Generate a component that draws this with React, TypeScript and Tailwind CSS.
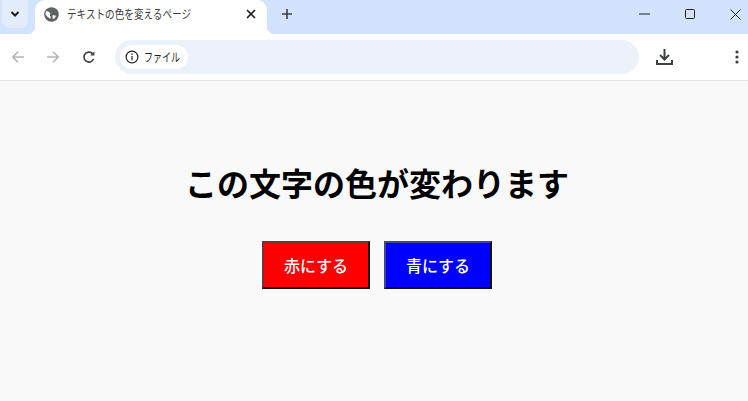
import React from 'react';

const jp = { fontFamily: '"Noto Sans CJK JP", sans-serif' };

const TabBar: React.FC = () => (
    <div className="flex h-[34px] bg-[#d3e3fd] items-stretch">
        <div className="w-[35px] shrink-0 pl-[2px]">
            <div className="w-[26px] h-[28px] rounded-b-[8px] bg-[#e3ecfb] flex items-center justify-center">
                <svg width="10" height="10" viewBox="0 0 10 10" fill="none" stroke="#1f1f1f" strokeWidth="2">
                    <path d="M1.5 3l3.5 3.5L8.5 3" />
                </svg>
            </div>
        </div>
        <div className="relative w-[232px] shrink-0 bg-white rounded-t-[10px] flex items-center pl-[9px] pr-[10px] pb-[6px]">
            <div className="absolute -left-[8px] bottom-0 w-[8px] h-[8px] bg-[radial-gradient(circle_at_0_0,#d3e3fd_8px,#ffffff_8.5px)]" />
            <div className="absolute -right-[8px] bottom-0 w-[8px] h-[8px] bg-[radial-gradient(circle_at_100%_0,#d3e3fd_8px,#ffffff_8.5px)]" />
            <svg width="15" height="15" viewBox="0 0 16 16" className="shrink-0">
                <circle cx="8" cy="8" r="7.8" fill="#5f6368" />
                <path d="M2.2 4.2L5 5l2 2-1.2 1.6L7.2 10.5 6.8 12.6 3.6 10.4 1.6 7.6zM9.2 8.6l3.6.6-1.6 3-2 .6z" fill="#ffffff" />
            </svg>
            <span style={jp} className="inline-block ml-[8px] flex-1 text-[12px] leading-none text-[#3c3c3c] whitespace-nowrap origin-left scale-x-[0.8]">テキストの色を変えるページ</span>
            <svg width="10" height="10" viewBox="0 0 10 10" fill="none" stroke="#1f1f1f" strokeWidth="1.7" className="shrink-0 mr-[1px]">
                <path d="M1 1l8 8M9 1l-8 8" />
            </svg>
        </div>
        <div className="ml-[14px] w-[12px] flex items-center justify-center pb-[6px]">
            <svg width="12" height="12" viewBox="0 0 12 12" fill="none" stroke="#3c4043" strokeWidth="1.6" className="shrink-0">
                <path d="M6 1v10M1 6h10" />
            </svg>
        </div>
        <div className="flex-1" />
        <div className="flex items-center gap-[35px] pr-[7px] pb-[6px]">
            <svg width="11" height="2" viewBox="0 0 11 2"><path d="M0 1h11" stroke="#1f1f1f" strokeWidth="1" /></svg>
            <svg width="10" height="10" viewBox="0 0 10 10" fill="none"><rect x="0.5" y="0.5" width="9" height="9" rx="1" stroke="#1f1f1f" strokeWidth="1" /></svg>
            <svg width="11" height="11" viewBox="0 0 11 11" fill="none" stroke="#1f1f1f" strokeWidth="1"><path d="M.5.5l10 10M10.5.5l-10 10" /></svg>
        </div>
    </div>
);

const Toolbar: React.FC = () => (
    <div className="flex h-[47px] bg-white border-b border-[#e1e3e6] items-center">
        <div className="w-[35px] flex justify-center">
            <svg width="14" height="14" viewBox="0 0 14 14" fill="none" stroke="#b3b5b8" strokeWidth="1.6"><path d="M13 7H2M7 1.8L1.8 7 7 12.2" /></svg>
        </div>
        <div className="w-[36px] flex justify-center">
            <svg width="14" height="14" viewBox="0 0 14 14" fill="none" stroke="#b3b5b8" strokeWidth="1.6"><path d="M1 7h11M7 1.8L12.2 7 7 12.2" /></svg>
        </div>
        <div className="w-[36px] flex justify-center">
            <svg width="14" height="14" viewBox="0 0 14 14" fill="none" stroke="#3c4043" strokeWidth="1.6"><path d="M11.6 9a5 5 0 1 1-.3-4.4" /><path d="M12.4 1.2v4.2H8.2z" fill="#3c4043" stroke="none" /></svg>
        </div>
        <div className="ml-[8px] w-[524px] h-[34px] rounded-full bg-[#edf2fa] flex items-center pl-[5px]">
            <div className="w-[68px] h-[24px] rounded-full bg-white flex items-center pl-[5px]">
                <svg width="14" height="14" viewBox="0 0 14 14" fill="none" stroke="#1f1f1f" strokeWidth="1.2" className="shrink-0">
                    <circle cx="7" cy="7" r="5.9" />
                    <path d="M7 6v4.2M7 3.6v1.4" />
                </svg>
                <span style={jp} className="inline-block ml-[5px] text-[12px] leading-none text-[#1f1f1f] whitespace-nowrap origin-left scale-x-[0.75]">ファイル</span>
            </div>
        </div>
        <div className="flex-1" />
        <div className="flex items-center">
            <svg width="17" height="16" viewBox="0 0 17 16" fill="none" stroke="#3c4043" strokeWidth="2" className="mr-[62px]">
                <path d="M8.5 0v10M4 6l4.5 4.5L13 6M1 11v4h15v-4" />
            </svg>
            <svg width="4" height="14" viewBox="0 0 4 14" fill="#3c4043" className="mr-[9px]">
                <circle cx="2" cy="2" r="1.6" /><circle cx="2" cy="7" r="1.6" /><circle cx="2" cy="12" r="1.6" />
            </svg>
        </div>
    </div>
);

const App: React.FC = () => {
    return (
        <div className="h-[401px] w-[748px] overflow-hidden flex flex-col bg-[#f9f9f9]" style={jp}>
            <TabBar />
            <Toolbar />
            <div className="flex-1 flex flex-col items-center pt-[78px] pl-[6px]">
                <h1 className="text-[32px] leading-[46px] font-bold text-black whitespace-nowrap">この文字の色が変わります</h1>
                <div className="mt-[36px] flex gap-[14px]">
                    <button className="w-[108px] h-[48px] border-2 border-t-[#773333] border-l-[#773333] border-r-[#111111] border-b-[#111111] bg-[#ff0000] text-white text-[16px] font-medium">赤にする</button>
                    <button className="w-[108px] h-[48px] border-2 border-t-[#444488] border-l-[#444488] border-r-[#111111] border-b-[#111111] bg-[#0000ff] text-white text-[16px] font-medium">青にする</button>
                </div>
            </div>
        </div>
    );
};

export default App;
